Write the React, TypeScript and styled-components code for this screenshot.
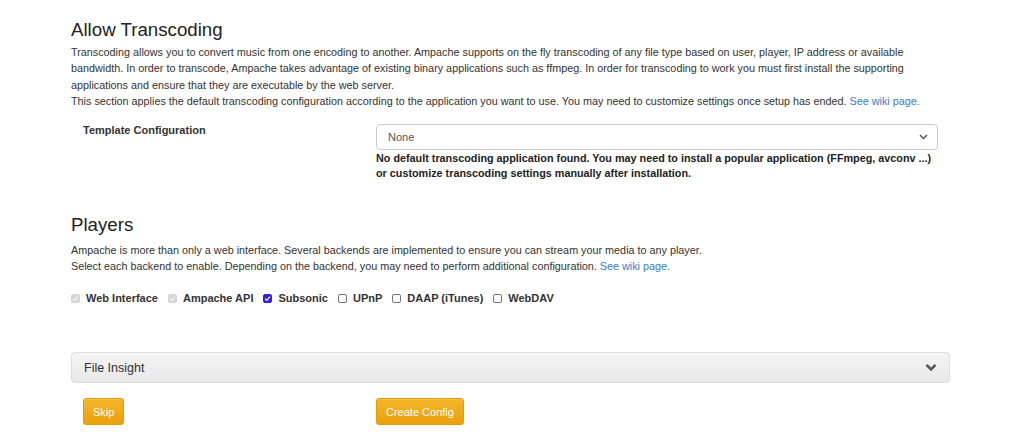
import React from "react";
import styled, { createGlobalStyle } from "styled-components";

const GlobalStyle = createGlobalStyle`
  html, body { margin: 0; padding: 0; background: #fff; }
  body {
    font-family: "Liberation Sans", Arial, Helvetica, sans-serif;
    color: #333;
    font-size: 11px;
  }
`;

const Page = styled.div`
  width: 879px;
  margin-left: 71px;
  padding-top: 18px;
`;

const Section = styled.section``;

const Heading = styled.h2<{ $top?: number }>`
  font-size: 18.7px;
  font-weight: 400;
  line-height: 24px;
  margin: ${(p) => p.$top ?? 0}px 0 2px;
  color: #222;
`;

const Text = styled.p<{ $top?: number }>`
  margin: ${(p) => p.$top ?? 0}px 0 0;
  font-size: 10.8px;
  line-height: 16.4px;
  color: #333;
`;

const Link = styled.a`
  color: #3a7bc8;
  text-decoration: none;
`;

const FormRow = styled.div`
  display: grid;
  grid-template-columns: 293px 586px;
  margin-top: 12px;
`;

const Col = styled.div`
  padding: 0 12px;
`;

const Label = styled.div`
  font-weight: 700;
  line-height: 16px;
`;

const SelectBox = styled.div`
  position: relative;
  margin-top: 2px;
  height: 26px;
  box-sizing: border-box;
  border: 1px solid #ccc;
  border-radius: 4px;
  background: #fff;
  display: flex;
  align-items: center;
  padding: 0 11px;
  color: #555;
  font-size: 11px;
`;

const SelectArrow = styled.svg`
  position: absolute;
  right: 9px;
  top: 9px;
`;

const Warning = styled.div`
  font-weight: 700;
  font-size: 10.8px;
  line-height: 15.5px;
  margin-top: 1px;
  color: #222;
`;

const CheckRow = styled.div`
  display: flex;
  align-items: center;
  margin-top: 18px;
`;

const CheckItem = styled.label`
  display: flex;
  align-items: center;
  gap: 6px;
  margin-right: 10px;
  font-weight: 700;
  font-size: 11px;
  color: #333;
`;

const Box = styled.span<{ $checked?: boolean; $disabled?: boolean }>`
  display: inline-flex;
  align-items: center;
  justify-content: center;
  width: 9px;
  height: 9px;
  box-sizing: border-box;
  border-radius: 2px;
  border: 1px solid
    ${(p) => (p.$disabled ? "#d6d6d6" : p.$checked ? "#3323e0" : "#767676")};
  background: ${(p) =>
    p.$disabled ? "#d6d6d6" : p.$checked ? "#3323e0" : "#fff"};
`;

const Panel = styled.div`
  margin-top: 48px;
  height: 31px;
  box-sizing: border-box;
  border: 1px solid #ddd;
  border-radius: 4px;
  background: linear-gradient(to bottom, #f5f5f5 0%, #e8e8e8 100%);
  display: flex;
  align-items: center;
  justify-content: space-between;
  padding: 0 12px;
  font-size: 12.5px;
  color: #333;
`;

const ButtonRow = styled.div`
  display: grid;
  grid-template-columns: 293px 586px;
  margin-top: 15px;
`;

const Button = styled.button`
  font-family: inherit;
  font-size: 11px;
  color: #fff;
  height: 27px;
  padding: 0 9px;
  border: 1px solid #e39a0c;
  border-radius: 3px;
  background: linear-gradient(to bottom, #f5b52a 0%, #eba109 100%);
  box-shadow: inset 0 1px 0 rgba(255, 255, 255, 0.15), 0 1px 1px rgba(0, 0, 0, 0.075);
  cursor: pointer;
`;

const Check = ({ checked, disabled, label }: { checked?: boolean; disabled?: boolean; label: string }) => (
  <CheckItem>
    <Box $checked={checked} $disabled={disabled}>
      {checked && (
        <svg width="7" height="7" viewBox="0 0 10 10">
          <path d="M1.5 5.2 L4 7.6 L8.6 2.4" fill="none" stroke={disabled ? "#f4f4f4" : "#fff"} strokeWidth="1.8" />
        </svg>
      )}
    </Box>
    {label}
  </CheckItem>
);

export default function App() {
  return (
    <>
      <GlobalStyle />
      <Page>
        <Section>
          <Heading>Allow Transcoding</Heading>
          <Text>
            Transcoding allows you to convert music from one encoding to another. Ampache supports on the fly transcoding of any file type based on user, player, IP address or available bandwidth. In order to transcode, Ampache takes advantage of existing binary applications such as ffmpeg. In order for transcoding to work you must first install the supporting applications and ensure that they are executable by the web server.
            <br />
            This section applies the default transcoding configuration according to the application you want to use. You may need to customize settings once setup has ended.{" "}
            <Link href="#">See wiki page.</Link>
          </Text>
          <FormRow>
            <Col>
              <Label>Template Configuration</Label>
            </Col>
            <Col>
              <SelectBox>
                None
                <SelectArrow width="9" height="6" viewBox="0 0 9 6">
                  <path d="M1 1 L4.5 4.5 L8 1" fill="none" stroke="#555" strokeWidth="1.5" />
                </SelectArrow>
              </SelectBox>
              <Warning>
                No default transcoding application found. You may need to install a popular application (FFmpeg, avconv ...) or customize transcoding settings manually after installation.
              </Warning>
            </Col>
          </FormRow>
        </Section>
        <Section>
          <Heading $top={31}>Players</Heading>
          <Text $top={5}>
            Ampache is more than only a web interface. Several backends are implemented to ensure you can stream your media to any player.
            <br />
            Select each backend to enable. Depending on the backend, you may need to perform additional configuration.{" "}
            <Link href="#">See wiki page.</Link>
          </Text>
          <CheckRow>
            <Check checked disabled label="Web Interface" />
            <Check checked disabled label="Ampache API" />
            <Check checked label="Subsonic" />
            <Check label="UPnP" />
            <Check label="DAAP (iTunes)" />
            <Check label="WebDAV" />
          </CheckRow>
        </Section>
        <Panel>
          File Insight
          <svg width="12" height="9" viewBox="0 0 12 9">
            <path d="M1.5 1.8 L6 6.3 L10.5 1.8" fill="none" stroke="#555" strokeWidth="2.6" />
          </svg>
        </Panel>
        <ButtonRow>
          <Col>
            <Button>Skip</Button>
          </Col>
          <Col>
            <Button>Create Config</Button>
          </Col>
        </ButtonRow>
      </Page>
    </>
  );
}
